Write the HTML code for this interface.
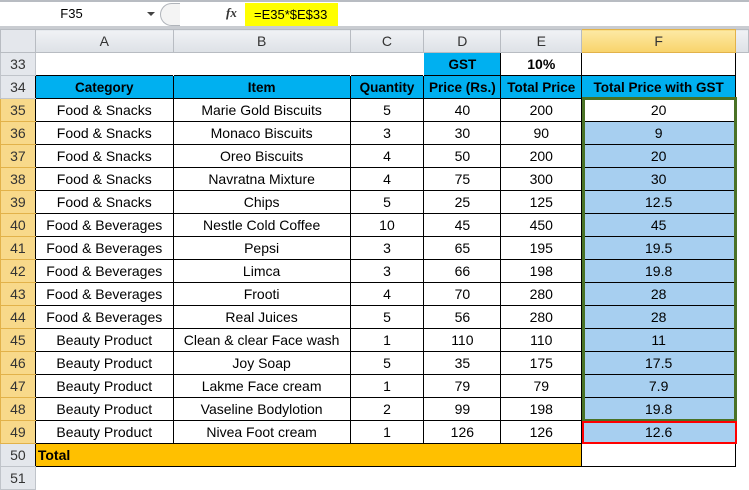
<!DOCTYPE html>
<html><head><style>
*{box-sizing:border-box;margin:0;padding:0}
body{width:749px;height:486px;overflow:hidden;background:#fff;position:relative;font-family:"Liberation Sans",sans-serif;font-size:14px;color:#000}
.fb{position:absolute;left:0;top:0;width:749px;height:29px;background:#fff;border-top:2px solid #b8bcc2;border-bottom:3px solid #c9ccd1}
.nb{position:absolute;left:0;top:2px;width:155px;height:20px;text-align:center;line-height:20px;font-size:13px;padding-right:12px}
.arr{position:absolute;left:147px;top:10px;width:0;height:0;border-left:4px solid transparent;border-right:4px solid transparent;border-top:4px solid #444}
.rnd{position:absolute;left:160px;top:1px;width:20px;height:23px;border:1px solid #b0b4ba;border-right:none;border-radius:12px 0 0 12px;background:#f4f4f4}
.fx{position:absolute;left:226px;top:3px;font-family:"Liberation Serif",serif;font-style:italic;font-weight:bold;font-size:13px;color:#333}
.fy{position:absolute;left:245px;top:1px;width:93px;height:23px;background:#ffff00;font-size:13px;line-height:23px;padding-left:9px}
table{position:absolute;left:0;top:29px;border-collapse:collapse;table-layout:fixed}
td{height:23px;border:1px solid #d4d4d4;text-align:center;white-space:nowrap;overflow:hidden;padding:0;line-height:21px}
.ch{background:linear-gradient(#f0f2f5,#dde1e6);color:#333;font-size:14px;border-color:#b8bcc2}
.chs{background:linear-gradient(#fde9a4,#f8d36b);border-color:#e2b24a}
.rh{background:#e4e7ec;color:#333;font-size:14px;border-color:#c0c4ca;text-align:center}
.rhs{background:#f8d98a;border-color:#e2b24a}
.d{border-color:#000}
.h{background:#00b0f0;font-weight:bold;font-size:13.5px;border-color:#000}
.sel{background:#a7cff0}
.tot{background:#ffc000;font-weight:bold;text-align:left;padding-left:2px;border-color:#000}
.nb34{border-right:none}
.g{position:absolute;border:3px solid #4a7226}
.r{position:absolute;border:2px solid #ff0000}
</style></head><body>
<div class="fb">
<div class="nb">F35</div><div class="arr"></div><div class="rnd"></div>
<div class="fx">fx</div><div class="fy">=E35*$E$33</div>
</div>
<table>
<colgroup><col style="width:35px"><col style="width:138px"><col style="width:177px"><col style="width:74px"><col style="width:77px"><col style="width:81px"><col style="width:154px"><col style="width:13px"></colgroup>
<tr><td class="ch" style="background:#e4e7ec"></td><td class="ch">A</td><td class="ch">B</td><td class="ch">C</td><td class="ch">D</td><td class="ch">E</td><td class="ch chs">F</td><td class="ch"></td></tr>
<tr><td class="rh">33</td><td style="border-bottom:none;border-color:transparent"></td><td style="border-color:transparent;border-bottom:none"></td><td style="border-color:transparent;border-bottom:none"></td><td class="h">GST</td><td class="d" style="font-weight:bold">10%</td><td class="d" style="border-top-color:transparent;border-right-color:#000"></td><td style="border-color:transparent"></td></tr>
<tr><td class="rh nb34">34</td><td class="h">Category</td><td class="h">Item</td><td class="h">Quantity</td><td class="h">Price (Rs.)</td><td class="h">Total Price</td><td class="h">Total Price with GST</td><td style="border-color:transparent"></td></tr>
<tr><td class="rh rhs nb34">35</td><td class="d">Food &amp; Snacks</td><td class="d">Marie Gold Biscuits</td><td class="d">5</td><td class="d">40</td><td class="d">200</td><td class="d">20</td><td style="border-color:transparent"></td></tr>
<tr><td class="rh rhs nb34">36</td><td class="d">Food &amp; Snacks</td><td class="d">Monaco Biscuits</td><td class="d">3</td><td class="d">30</td><td class="d">90</td><td class="d sel">9</td><td style="border-color:transparent"></td></tr>
<tr><td class="rh rhs nb34">37</td><td class="d">Food &amp; Snacks</td><td class="d">Oreo Biscuits</td><td class="d">4</td><td class="d">50</td><td class="d">200</td><td class="d sel">20</td><td style="border-color:transparent"></td></tr>
<tr><td class="rh rhs nb34">38</td><td class="d">Food &amp; Snacks</td><td class="d">Navratna Mixture</td><td class="d">4</td><td class="d">75</td><td class="d">300</td><td class="d sel">30</td><td style="border-color:transparent"></td></tr>
<tr><td class="rh rhs nb34">39</td><td class="d">Food &amp; Snacks</td><td class="d">Chips</td><td class="d">5</td><td class="d">25</td><td class="d">125</td><td class="d sel">12.5</td><td style="border-color:transparent"></td></tr>
<tr><td class="rh rhs nb34">40</td><td class="d">Food &amp; Beverages</td><td class="d">Nestle Cold Coffee</td><td class="d">10</td><td class="d">45</td><td class="d">450</td><td class="d sel">45</td><td style="border-color:transparent"></td></tr>
<tr><td class="rh rhs nb34">41</td><td class="d">Food &amp; Beverages</td><td class="d">Pepsi</td><td class="d">3</td><td class="d">65</td><td class="d">195</td><td class="d sel">19.5</td><td style="border-color:transparent"></td></tr>
<tr><td class="rh rhs nb34">42</td><td class="d">Food &amp; Beverages</td><td class="d">Limca</td><td class="d">3</td><td class="d">66</td><td class="d">198</td><td class="d sel">19.8</td><td style="border-color:transparent"></td></tr>
<tr><td class="rh rhs nb34">43</td><td class="d">Food &amp; Beverages</td><td class="d">Frooti</td><td class="d">4</td><td class="d">70</td><td class="d">280</td><td class="d sel">28</td><td style="border-color:transparent"></td></tr>
<tr><td class="rh rhs nb34">44</td><td class="d">Food &amp; Beverages</td><td class="d">Real Juices</td><td class="d">5</td><td class="d">56</td><td class="d">280</td><td class="d sel">28</td><td style="border-color:transparent"></td></tr>
<tr><td class="rh rhs nb34">45</td><td class="d">Beauty Product</td><td class="d">Clean &amp; clear Face wash</td><td class="d">1</td><td class="d">110</td><td class="d">110</td><td class="d sel">11</td><td style="border-color:transparent"></td></tr>
<tr><td class="rh rhs nb34">46</td><td class="d">Beauty Product</td><td class="d">Joy Soap</td><td class="d">5</td><td class="d">35</td><td class="d">175</td><td class="d sel">17.5</td><td style="border-color:transparent"></td></tr>
<tr><td class="rh rhs nb34">47</td><td class="d">Beauty Product</td><td class="d">Lakme Face cream</td><td class="d">1</td><td class="d">79</td><td class="d">79</td><td class="d sel">7.9</td><td style="border-color:transparent"></td></tr>
<tr><td class="rh rhs nb34">48</td><td class="d">Beauty Product</td><td class="d">Vaseline Bodylotion</td><td class="d">2</td><td class="d">99</td><td class="d">198</td><td class="d sel">19.8</td><td style="border-color:transparent"></td></tr>
<tr><td class="rh rhs nb34">49</td><td class="d">Beauty Product</td><td class="d">Nivea Foot cream</td><td class="d">1</td><td class="d">126</td><td class="d">126</td><td class="d sel">12.6</td><td style="border-color:transparent"></td></tr>
<tr><td class="rh nb34">50</td><td class="tot" colspan="5">Total</td><td class="d"></td><td style="border-color:transparent"></td></tr>
<tr><td class="rh">51</td><td style="border-color:transparent"></td><td style="border-color:transparent"></td><td style="border-color:transparent"></td><td style="border-color:transparent"></td><td style="border-color:transparent"></td><td style="border-color:transparent"></td><td style="border-color:transparent"></td></tr>
</table>
<div class="g" style="left:582px;top:97px;width:155px;height:325px"></div>
<div class="r" style="left:582px;top:421px;width:155px;height:23px"></div>
</body></html>
